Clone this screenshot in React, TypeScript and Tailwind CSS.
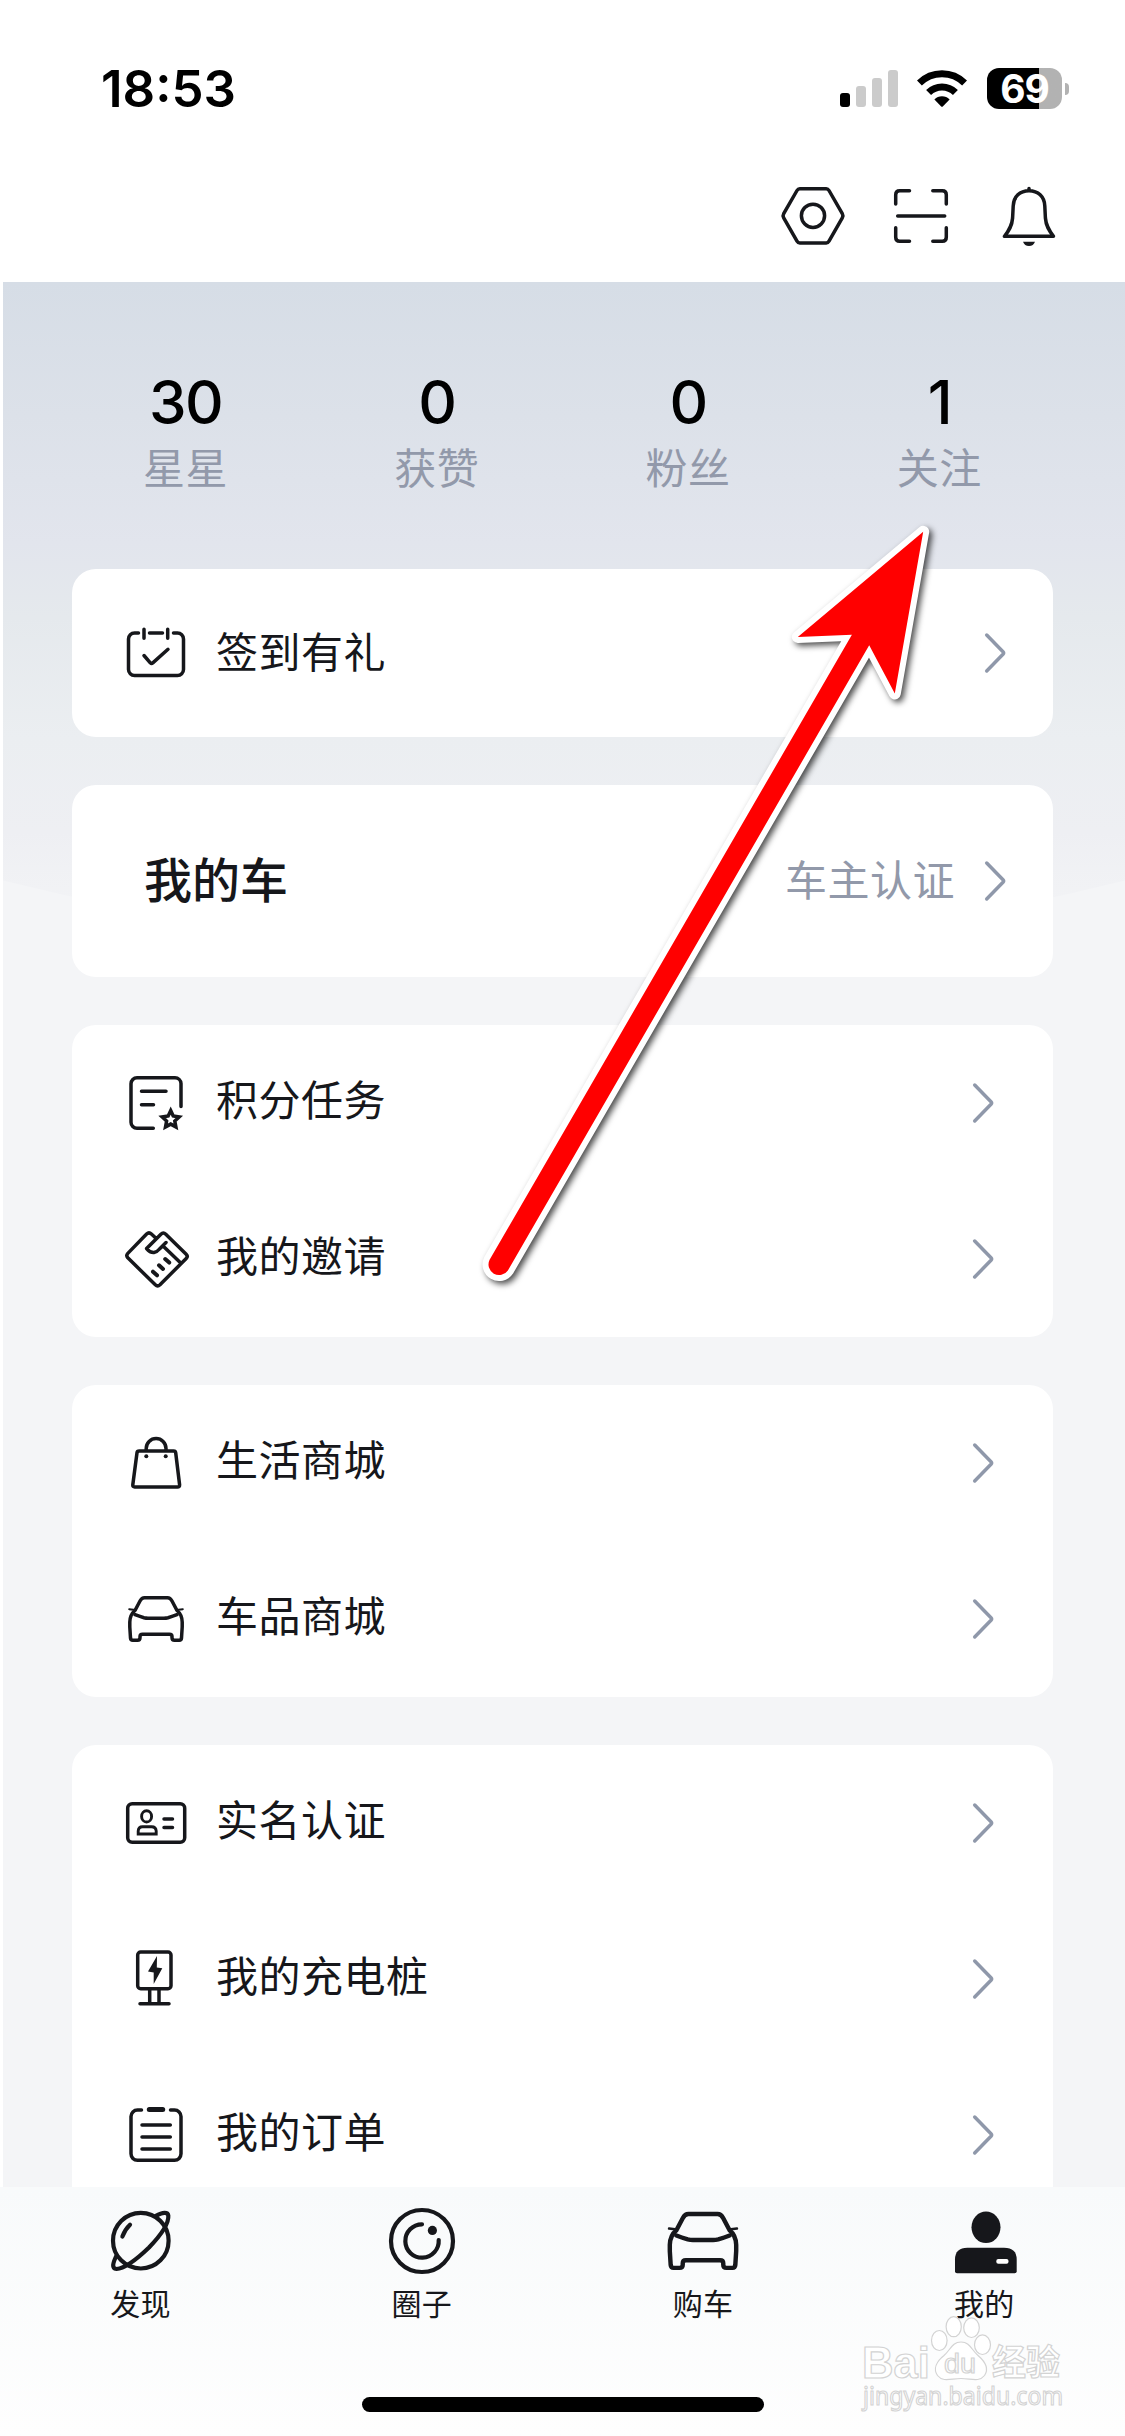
import React from 'react';

const INK = '#16171b';

type IconProps = { size?: string; box?: number; width?: number; children: React.ReactNode };

function Icon({ size = 'size-[60px]', box = 60, width = 3.5, children }: IconProps) {
  return (
    <svg
      className={`${size} shrink-0 overflow-visible`}
      viewBox={`0 0 ${box} ${box}`}
      fill="none"
      stroke={INK}
      strokeWidth={width}
      strokeLinecap="round"
      strokeLinejoin="round"
    >
      {children}
    </svg>
  );
}

const CalendarIcon = () => (
  <Icon>
    <path d="M12.5 10H8.5A6 6 0 0 0 2.5 16V46.5A6 6 0 0 0 8.5 52.5H51.5A6 6 0 0 0 57.5 46.5V16A6 6 0 0 0 51.5 10H47.5M23.5 10H36.5M18 6.3V15.2M41.7 6.3V15.2" />
    <path d="M18 32.5L24.3 39.8Q25.5 41 26.8 39.9L42 26.3" />
  </Icon>
);

const TaskIcon = () => (
  <Icon>
    <path d="M55 33.5V10.5A6 6 0 0 0 49 4.7H11A6 6 0 0 0 5 10.7V49.3A6 6 0 0 0 11 55.3H27.3M15.5 18.3H40M15.5 31.7H27.5" />
    <path
      d="M44.7 37.6L47.2 43L53.2 43.9L48.8 48L49.9 53.9L44.7 51.1L39.5 53.9L40.6 48L36.2 43.9L42.2 43Z"
      strokeLinejoin="miter"
    />
  </Icon>
);

const InviteIcon = () => (
  <Icon>
    <path d="M30 9.3L25.4 5Q23 2.8 20.6 5L1.8 24.4Q-.2 26.6 1.8 28.8L29.3 55.8Q31.6 58 34 55.8L60.2 29.4Q62.3 27.3 60.2 25.2L39.8 5.2Q37.3 2.8 34.9 5.2L20.6 19.6Q24 23.8 28 23.5Q31 23 33.5 20L40 13.6M37.3 17.2L55 34.3" />
    <path d="M27 42.7L31 46.3M33 36.3L37 39.9M39.2 30L43.2 33.6" strokeWidth={4} />
  </Icon>
);

const BagIcon = () => (
  <Icon>
    <path d="M13.2 18H47.6Q49.5 18 49.7 19.8L53.6 51.8Q53.7 54 51.5 54H8.7Q6.5 54 6.8 51.8L11 19.8Q11.2 18 13.2 18ZM20.2 18V15.5A9.9 9.9 0 0 1 40 15.5V18" />
    <circle cx="20.3" cy="23.3" r="2" fill={INK} stroke="none" />
    <circle cx="39.7" cy="23.3" r="2" fill={INK} stroke="none" />
  </Icon>
);

const CarIcon = ({ size }: { size?: string }) => (
  <Icon size={size}>
    <path d="M9 21.5L14 12Q15.7 8.7 18.5 8.7H41.5Q44.3 8.7 46 12L51 21.5Q56 25.5 56.2 33V38L55.5 49Q55.3 51.2 53.3 51.2H48.5Q46 51.2 46 48.7V47.5Q46 45.2 43.5 45.2H16.5Q14 45.2 14 47.5V48.7Q14 51.2 11.5 51.2H6.7Q4.7 51.2 4.5 49L3.8 38V33Q4 25.5 9 21.5Z" />
    <path d="M9 25.7Q13 27.3 18 28.7Q20 29.2 22 29.2H38Q40 29.2 42 28.7Q47 27.3 51 25.7" />
    <path d="M3.2 20.2L9.5 21M56.8 20.2L50.5 21" strokeWidth={2} />
  </Icon>
);

const IdIcon = () => (
  <Icon>
    <rect x="1.7" y="10.7" width="57" height="38.6" rx="4.5" />
    <g strokeWidth={2.9}>
      <ellipse cx="20.6" cy="23.4" rx="5" ry="5.6" />
      <path d="M12.2 41V38Q12.4 33.7 16.5 33.7H25.5Q30 33.7 30.2 38V41Z" strokeLinejoin="miter" />
    </g>
    <path d="M38 26H46.5M38 34.4H46.5" />
  </Icon>
);

const ChargerIcon = () => (
  <Icon>
    <rect x="11.7" y="3" width="33.3" height="36.7" rx="3" />
    <path d="M23.7 40V54.5M33 40V54.5M14 54.7H43" />
    <path d="M31 7L22 22.4L27.7 23.4V35L36.3 19.2L30.8 18.6Z" fill={INK} stroke="none" />
  </Icon>
);

const OrderIcon = () => (
  <Icon>
    <path d="M15.5 5H11.5A6.5 6.5 0 0 0 5 11.5V48.8A6.5 6.5 0 0 0 11.5 55.3H48.5A6.5 6.5 0 0 0 55 48.8V11.5A6.5 6.5 0 0 0 48.5 5H44.5M16 20H44.3M16 32H44.3M16 44H44.3" />
    <path d="M23.3 4.4H36.7" strokeWidth={5} />
  </Icon>
);

const GearIcon = () => (
  <Icon size="size-[72px]" box={72}>
    <path d="M22.8 8.7H49.2Q51 8.7 52 10.5L65.3 33.6Q66.5 35.7 65.3 37.8L52 61.2Q51 63 49.2 63H22.8Q21 63 20 61.2L6.7 37.8Q5.5 35.7 6.7 33.6L20 10.5Q21 8.7 22.8 8.7Z" />
    <circle cx="36" cy="35.8" r="11.6" />
  </Icon>
);

const ScanIcon = () => (
  <Icon size="size-[72px]" box={72}>
    <path d="M24.5 10.7H14.7Q10.7 10.7 10.7 14.7V24M47.8 10.7H57.3Q61.3 10.7 61.3 14.7V24M10.7 47.8V57.3Q10.7 61.3 14.7 61.3H24.5M61.3 47.8V57.3Q61.3 61.3 57.3 61.3H47.8M12.7 36H59.7" />
  </Icon>
);

const BellIcon = () => (
  <Icon size="size-[72px]" box={72}>
    <path d="M36 10.7C27 10.7 20.5 16.5 20.2 26L19.6 38C19 46 16 50.5 11.5 56.3H60.5C56 50.5 53 46 52.4 38L51.8 26C51.5 16.5 45 10.7 36 10.7ZM36 10V8.5" />
    <path d="M30 61.8H42Q40.5 66 36 66T30 61.8Z" fill={INK} stroke="none" />
  </Icon>
);

const PlanetIcon = () => (
  <Icon size="size-[84px]" box={84} width={4.2}>
    <circle cx="41.8" cy="41.7" r="27.8" />
    <path d="M56.5 17C64 12.8 68.8 13 69.3 16.5C70 24 62.5 35.5 50 48.5C36.5 61.5 25 69.5 17.5 70C12.500 69.5 13.8 64.5 17 57.5" />
    <path d="M23.4 37.5Q26 30.5 31 25.8" />
  </Icon>
);

const CircleIcon = () => (
  <Icon size="size-[84px]" box={84} width={4.2}>
    <circle cx="42" cy="42" r="31" />
    <path d="M42 25.3A16.7 16.7 0 1 0 58.7 41" />
    <circle cx="52.4" cy="31.4" r="4.6" fill={INK} stroke="none" />
  </Icon>
);

const PersonIcon = () => (
  <Icon size="size-[84px]" box={84}>
    <g fill={INK} stroke="none">
      <ellipse cx="44" cy="28.3" rx="14.5" ry="15.7" />
      <path d="M13 60.5Q13 48.700 25.5 48.700H62Q74.700 48.700 74.700 60.5V72.3Q74.700 74.3 72.700 74.3H15Q13 74.3 13 72.3Z" />
      <rect x="54.3" y="60" width="12.2" height="4.8" rx="2" fill="#fff" />
    </g>
  </Icon>
);

const Chevron = () => (
  <svg className="h-[42px] w-6 shrink-0" viewBox="0 0 24 42" fill="none" stroke="#8f98aa" strokeWidth={3.5} strokeLinecap="round" strokeLinejoin="round">
    <path d="M3.700 3L20 19.700Q21.200 21 20 22.300L3.700 39" />
  </svg>
);

function StatusBar() {
  return (
    <div className="flex h-[114px] items-end justify-between pr-[56px] pl-[101px]">
      <span className="mb-[-5px] text-[51px] leading-[60px] font-semibold text-black">18:53</span>
      <div className="mb-[5px] flex h-[41px] items-center">
        <div className="mt-[-1px] flex h-[37px] items-end gap-1.5">
          <i className="h-[14px] w-[10px] rounded-[3px] bg-black" />
          <i className="h-[21px] w-[10px] rounded-[3px] bg-[#cbcbcb]" />
          <i className="h-[29px] w-[10px] rounded-[3px] bg-[#cbcbcb]" />
          <i className="h-[37px] w-[10px] rounded-[3px] bg-[#cbcbcb]" />
        </div>
        <svg className="mt-[-1px] ml-[19px] h-[37px] w-[50px]" viewBox="0 0 50 37" fill="none" stroke="#000" strokeWidth={7}>
          <path d="M2.4 13A32 32 0 0 1 47.6 13" />
          <path d="M11.6 22.6A19 19 0 0 1 38.4 22.6" />
          <path d="M17.4 29.4A10.8 10.8 0 0 1 32.6 29.4L25.8 36.4Q25 37 24.2 36.4Z" fill="#000" stroke="none" />
        </svg>
        <div className="ml-5 flex h-[41px] w-[75px] items-center justify-center rounded-xl bg-linear-to-r from-black from-69% to-[#b2b2b2] to-69%">
          <span className="text-[39px] leading-none font-bold tracking-[-1px] text-white">69</span>
        </div>
        <i className="ml-[3px] h-3 w-1 rounded-r-full bg-[#b2b2b2]" />
      </div>
    </div>
  );
}

const stats = [
  { value: '30', label: '星星' },
  { value: '0', label: '获赞' },
  { value: '0', label: '粉丝' },
  { value: '1', label: '关注' },
];

function Row({ icon, label }: { icon: React.ReactNode; label: string }) {
  return (
    <div className="flex h-[156px] items-center pr-[58px] pl-[54px]">
      {icon}
      <span className="mt-[-4px] ml-[30px] flex-1 text-[42px] leading-none tracking-[0.5px]">{label}</span>
      <Chevron />
    </div>
  );
}

const tabs = [
  { icon: <PlanetIcon />, label: '发现' },
  { icon: <CircleIcon />, label: '圈子' },
  { icon: <CarIcon size="size-[76px]" />, label: '购车' },
  { icon: <PersonIcon />, label: '我的' },
];

function Watermark() {
  return (
    <svg className="absolute top-[2310px] left-[850px] h-[126px] w-[230px] overflow-visible" viewBox="850 2310 230 126" fill="#fff" stroke="#d3d3d3" strokeWidth={1.2}>
      <g className="font-bold">
        <text x="862" y="2378" fontSize="45" textLength="68" lengthAdjust="spacingAndGlyphs" fontFamily="Liberation Sans">Bai</text>
        <text x="992" y="2375" fontSize="35" textLength="68" lengthAdjust="spacingAndGlyphs" fontFamily="Noto Sans CJK SC">经验</text>
      </g>
      <ellipse cx="939.3" cy="2340.5" rx="7.8" ry="10" />
      <ellipse cx="953.7" cy="2326.7" rx="7.6" ry="10" />
      <ellipse cx="971.5" cy="2327.7" rx="7.8" ry="9.8" />
      <ellipse cx="982.5" cy="2344.7" rx="8" ry="9.8" />
      <path d="M961 2342C952 2342 950.5 2350 944 2355.5C936.5 2361.5 933 2369 937.5 2375.5C943 2382.5 951 2378.5 961 2378.5S979 2382.5 984.5 2375.5C989 2369 985 2361.5 978 2355.5C971.5 2350 970 2342 961 2342Z" />
      <text x="944" y="2373" fontSize="27" textLength="32" lengthAdjust="spacingAndGlyphs" fontFamily="Liberation Sans">du</text>
      <text x="863" y="2405" fontSize="26" textLength="200" lengthAdjust="spacingAndGlyphs" fontFamily="Noto Sans">jingyan.baidu.com</text>
    </svg>
  );
}

function Arrow() {
  const shape = 'M851.9 634.7L489.6 1259.8A10.6 10.6 0 0 0 507.9 1270.4L869.2 645.3L894.8 693.5L923.2 531.8L797.8 637Z';
  return (
    <svg
      className="pointer-events-none absolute top-[510px] left-[470px] h-[790px] w-[480px] drop-shadow-[3px_3px_3px_rgba(0,0,0,0.7)]"
      viewBox="470 510 480 790"
    >
      <path d={shape} fill="#fff" stroke="#fff" strokeWidth={12} strokeLinejoin="round" />
      <path d={shape} fill="#f00" />
    </svg>
  );
}

export default function App() {
  return (
    <div className="relative flex h-[2436px] w-[1125px] flex-col overflow-hidden bg-white font-['Inter','Noto_Sans_CJK_SC',sans-serif] text-[#16171b]">
      <header className="h-[282px] shrink-0">
        <StatusBar />
        <div className="mt-[66px] flex justify-end gap-9 pr-[60px]">
          <GearIcon />
          <ScanIcon />
          <BellIcon />
        </div>
      </header>

      <main className="relative ml-[3px] h-[1905px] shrink-0 overflow-hidden bg-[#f4f5f7] pr-[72px] pl-[69px]">
        <div className="absolute inset-x-0 top-0 h-[670px] bg-[linear-gradient(#d6dde6_0%,#dce1e9_20%,#e2e5ed_39%,#e5e9ed_50%,#ebeef1_68%,#eeeff3_82%,#f3f4f6_96%)] [clip-path:circle(2300px_at_561px_-1632px)]" />
        <div className="relative">
          <div className="mx-[-12px] grid h-[287px] grid-cols-4 pt-[84px]">
            {stats.map((s) => (
              <div key={s.label} className="flex flex-col items-center">
                <span className="text-[60px] leading-[72px] font-medium tracking-[-1.5px] text-black">{s.value}</span>
                <span className="mt-[7px] text-[42px] leading-[48px] tracking-[0.5px] text-[#9299aa]">{s.label}</span>
              </div>
            ))}
          </div>

          <div className="flex flex-col gap-12">
            <section className="flex h-[168px] items-center rounded-3xl bg-white pr-[46px] pl-[54px]">
              <CalendarIcon />
              <span className="mt-[-1px] ml-[30px] flex-1 text-[42px] leading-none tracking-[0.5px]">签到有礼</span>
              <Chevron />
            </section>

            <section className="flex h-[192px] items-center rounded-3xl bg-white pr-[46px] pl-[72px]">
              <h2 className="mt-[-1px] flex-1 text-5xl leading-none font-medium">我的车</h2>
              <span className="mt-[-1px] mr-7 text-[42px] leading-none tracking-[0.5px] text-[#9299aa]">车主认证</span>
              <Chevron />
            </section>

            <section className="rounded-3xl bg-white">
              <Row icon={<TaskIcon />} label="积分任务" />
              <Row icon={<InviteIcon />} label="我的邀请" />
            </section>

            <section className="rounded-3xl bg-white">
              <Row icon={<BagIcon />} label="生活商城" />
              <Row icon={<CarIcon />} label="车品商城" />
            </section>

            <section className="rounded-3xl bg-white pb-12">
              <Row icon={<IdIcon />} label="实名认证" />
              <Row icon={<ChargerIcon />} label="我的充电桩" />
              <Row icon={<OrderIcon />} label="我的订单" />
            </section>
          </div>
        </div>
      </main>

      <nav className="relative h-[249px] shrink-0 bg-linear-to-b from-[#f8fafb] to-[#fefefe]">
        <div className="grid grid-cols-4 pt-3">
          {tabs.map((t) => (
            <div key={t.label} className="flex flex-col items-center">
              <div className="flex h-[84px] items-center">{t.icon}</div>
              <span className="mt-px text-[30px] leading-10 tracking-[0.5px]">{t.label}</span>
            </div>
          ))}
        </div>
        <div className="mx-auto mt-[73px] h-[15px] w-[402px] rounded-full bg-black" />
      </nav>

      <Watermark />
      <Arrow />
    </div>
  );
}
